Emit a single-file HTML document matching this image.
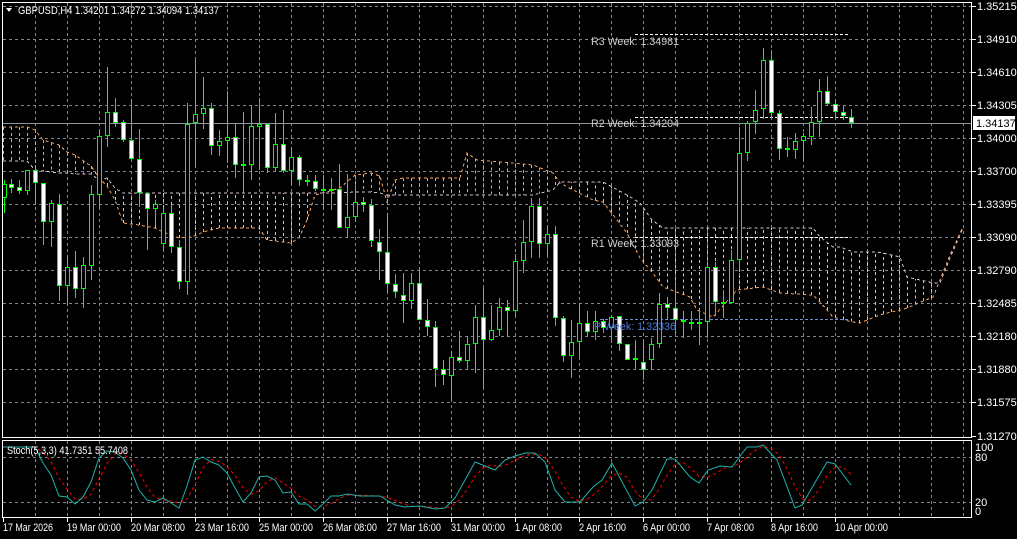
<!DOCTYPE html>
<html><head><meta charset="utf-8"><style>
html,body{margin:0;padding:0;background:#000;width:1017px;height:539px;overflow:hidden}
svg{display:block}
text{font-family:"Liberation Sans",sans-serif;font-size:11px}
</style></head><body>
<svg id="s" width="1017" height="539" xmlns="http://www.w3.org/2000/svg" shape-rendering="crispEdges">
<rect width="1017" height="539" fill="#000"/>
<g id="grid"></g>
<g id="cloud"></g>
<g id="piv">
<line x1="635" y1="34.5" x2="848" y2="34.5" stroke="#fff" stroke-dasharray="3,2"/>
<line x1="635" y1="117.5" x2="848" y2="117.5" stroke="#fff" stroke-dasharray="3,2"/>
<line x1="635" y1="237.5" x2="848" y2="237.5" stroke="#fff" stroke-dasharray="3,2"/>
<line x1="600" y1="319.5" x2="848" y2="319.5" stroke="#6f8fd0" stroke-dasharray="3,2"/>
</g>
<line x1="3" y1="123.5" x2="971" y2="123.5" stroke="#8c96a0"/>
<g id="candles"></g>
<g fill="#d0d0d0">
<text x="591" y="45" textLength="88" lengthAdjust="spacingAndGlyphs">R3 Week: 1.34981</text>
<text x="591" y="127" textLength="88" lengthAdjust="spacingAndGlyphs">R2 Week: 1.34204</text>
<text x="591" y="247" textLength="88" lengthAdjust="spacingAndGlyphs">R1 Week: 1.33093</text>
</g>
<text x="594" y="330" fill="#4a78d8" textLength="82" lengthAdjust="spacingAndGlyphs">P Week: 1.32336</text>
<g id="stoch"></g>
<rect x="2.5" y="2.5" width="969" height="435" fill="none" stroke="#fff"/>
<rect x="2.5" y="440.5" width="969" height="77" fill="none" stroke="#fff"/>
<polygon points="6,8 12,8 9,12" fill="#fff"/>
<text x="18" y="14" fill="#fff" textLength="201" lengthAdjust="spacingAndGlyphs">GBPUSD,H4  1.34201 1.34272 1.34094 1.34137</text>
<text x="7" y="454" fill="#fff" textLength="121" lengthAdjust="spacingAndGlyphs">Stoch(5,3,3) 41.7351 55.7408</text>
<g id="axis" fill="#fff"></g>
<rect x="973" y="116" width="42" height="14" fill="#fff"/>
<text x="976" y="127" fill="#000">1.34137</text>
</svg>
<script>
var NS="http://www.w3.org/2000/svg";
function el(p,t,a,txt){var e=document.createElementNS(NS,t);for(var k in a)e.setAttribute(k,a[k]);if(txt!=null)e.textContent=txt;document.getElementById(p).appendChild(e);return e;}
for(var x=35;x<972;x+=32){el('grid','line',{x1:x+.5,y1:3,x2:x+.5,y2:437,stroke:'#7c8694','stroke-dasharray':'3,3'});el('grid','line',{x1:x+.5,y1:441,x2:x+.5,y2:517,stroke:'#7c8694','stroke-dasharray':'3,3'});}
var prices=["1.35215","1.34910","1.34610","1.34305","1.34000","1.33700","1.33395","1.33090","1.32790","1.32485","1.32180","1.31880","1.31575","1.31270"];
for(var i=0;i<14;i++){var y=6+i*33-(i==13?-1:0);if(i<13)el('grid','line',{x1:3,y1:y+.5,x2:971,y2:y+.5,stroke:'#7c8694','stroke-dasharray':'3,3'});
el('axis','line',{x1:972,y1:y+.5,x2:976,y2:y+.5,stroke:'#fff'});el('axis','text',{x:977,y:y+4},prices[i]);}
el('grid','line',{x1:3,y1:457.5,x2:971,y2:457.5,stroke:'#7c8694','stroke-dasharray':'3,3'});
el('grid','line',{x1:3,y1:502.5,x2:971,y2:502.5,stroke:'#7c8694','stroke-dasharray':'3,3'});
[["100",451],["80",461],["20",506],["0",515]].forEach(function(a){el('axis','text',{x:975,y:a[1]},a[0]);});
var tl=[["17 Mar 2026",3,50],["19 Mar 00:00",67,54],["20 Mar 08:00",131,54],["23 Mar 16:00",195,54],["25 Mar 00:00",259,54],["26 Mar 08:00",323,54],["27 Mar 16:00",387,54],["31 Mar 00:00",451,54],["1 Apr 08:00",515,47],["2 Apr 16:00",579,47],["6 Apr 00:00",643,47],["7 Apr 08:00",707,47],["8 Apr 16:00",771,47],["10 Apr 00:00",835,53]];
tl.forEach(function(a){el('axis','line',{x1:a[1]+.5,y1:518,x2:a[1]+.5,y2:522,stroke:'#fff'});el('axis','text',{x:a[1],y:531,textLength:a[2],lengthAdjust:'spacingAndGlyphs'},a[0]);});
var C=[[3,127,161],[27,127,161],[35,130,170],[43,140,171],[59,145,173],[67,152,173],[75,155,174],[91,166,174],[99,178,180],[107,186,178],[115,200,188],[123,223,193],[139,225,193],[155,228,193],[163,232,193],[179,238,193],[195,236,193],[203,232,193],[219,228,193],[259,228,193],[267,240,193],[291,243,193],[299,238,193],[307,220,193],[315,195,193],[323,193,193],[340,188,193],[355,175,192],[371,173,192],[380,176,193],[387,202,195],[395,180,195],[403,178,195],[460,178,195],[467,153,195],[477,160,195],[533,165,195],[553,173,190],[560,183,182],[573,190,182],[593,200,182],[603,202,182],[627,233,195],[640,258,203],[652,272,220],[663,287,228],[690,297,228],[697,310,228],[713,317,228],[737,290,228],[763,287,228],[780,293,228],[813,295,228],[820,302,237],[833,317,247],[840,319,247],[853,322,252],[860,323,252],[877,316,252],[887,313,254],[900,310,257],[907,308,277],[933,297,283],[940,280,283],[950,255,258],[963,227,228]];
function interp(x,k){for(var i=0;i<C.length-1;i++){if(x>=C[i][0]&&x<=C[i+1][0]){var t=(x-C[i][0])/(C[i+1][0]-C[i][0]||1);return C[i][k]+t*(C[i+1][k]-C[i][k]);}}return C[C.length-1][k];}
var po="",pl="";C.forEach(function(c){po+=c[0]+","+c[1]+" ";pl+=c[0]+","+c[2]+" ";});
for(var x=3;x<=963;x+=8){var a=interp(x,1),b=interp(x,2);if(Math.abs(a-b)>3){var col=a<b?'#f4a460':'#d8bfd8';el('cloud','line',{x1:x+.5,y1:a,x2:x+.5,y2:b,stroke:col,'stroke-dasharray':'3,3'});}}
el('cloud','polyline',{points:po,fill:'none',stroke:'#f4a460','stroke-dasharray':'3,3'});
el('cloud','polyline',{points:pl,fill:'none',stroke:'#d8bfd8','stroke-dasharray':'3,3'});
var K=[[4,180,184,198,213,1],[11,179,184,188,193,0],[19,180,187,191,194,0],[27,170,170,191,195,1],[35,170,170,183,205,0],[43,183,183,222,245,0],[51,200,203,222,247,1],[59,194,204,286,301,0],[67,256,267,286,306,1],[75,251,267,289,298,0],[83,257,265,289,308,1],[91,185,194,266,280,1],[99,129,136,195,208,1],[107,67,112,136,147,1],[115,98,112,123,127,0],[123,120,122,140,142,0],[131,99,140,159,160,0],[139,129,159,193,207,0],[147,193,193,209,250,0],[155,200,204,209,225,1],[163,207,213,244,250,1],[171,205,213,247,253,0],[179,240,247,282,289,0],[187,103,124,282,295,1],[195,60,114,123,167,1],[203,77,108,114,129,1],[211,103,108,146,155,0],[219,130,141,146,156,1],[227,91,137,141,163,1],[235,124,137,165,178,0],[243,112,164,165,193,1],[251,105,126,165,180,1],[259,98,124,127,170,1],[267,123,124,168,173,0],[275,113,144,168,172,1],[283,110,144,171,173,0],[291,147,157,171,185,1],[299,155,157,180,186,0],[307,175,180,181,186,1],[315,175,181,189,191,0],[323,175,189,190,210,1],[331,178,189,190,210,0],[339,164,189,228,228,0],[347,174,217,228,238,1],[355,186,202,217,222,1],[363,197,202,205,212,0],[371,199,205,241,247,0],[379,229,242,252,280,0],[387,213,252,284,293,0],[395,274,284,292,298,0],[403,273,295,301,323,0],[411,273,283,301,309,1],[419,267,283,320,320,0],[427,299,320,327,336,0],[435,321,327,369,387,0],[443,360,369,375,385,0],[451,351,357,376,400,1],[459,331,357,361,363,0],[467,336,344,361,370,1],[475,305,317,344,373,1],[483,288,317,340,388,0],[491,305,330,340,341,1],[499,298,307,330,336,1],[507,300,307,311,336,0],[515,254,261,311,318,1],[523,220,242,261,273,1],[531,198,206,242,258,1],[539,198,206,244,258,0],[547,226,234,244,256,1],[555,226,234,318,326,0],[563,316,318,356,362,0],[571,320,342,356,378,1],[579,303,323,342,357,1],[587,311,323,332,336,0],[595,311,321,332,340,1],[603,319,321,328,333,0],[611,316,317,328,343,1],[619,316,316,344,351,0],[627,344,344,360,360,0],[635,340,358,360,369,0],[643,340,362,370,380,0],[651,338,344,360,370,1],[659,293,304,344,348,1],[667,297,304,308,320,0],[675,284,308,320,334,0],[683,311,320,322,338,0],[691,311,322,324,330,0],[699,309,322,324,345,0],[707,262,267,322,338,1],[715,262,267,302,316,0],[723,290,302,303,318,1],[731,250,260,303,303,1],[739,127,153,260,268,1],[747,121,123,153,161,1],[755,90,110,122,134,1],[763,48,60,109,119,1],[771,50,60,113,118,0],[779,110,113,149,160,0],[787,137,148,150,157,0],[795,133,141,150,159,1],[803,133,136,141,161,1],[811,107,122,137,145,1],[819,79,91,122,137,1],[827,76,91,104,106,0],[835,100,104,112,118,0],[843,105,112,116,120,0],[851,109,117,123,128,0]];
K.forEach(function(c){var x=c[0];el('candles','line',{x1:x+.5,y1:c[1],x2:x+.5,y2:c[4],stroke:'#00ff00'});
var h=Math.max(c[3]-c[2],1);
if(h<=2){el('candles','rect',{x:x-2,y:c[2],width:5,height:2,fill:'#00ff00'});}
else el('candles','rect',{x:x-2+.5,y:c[2]+.5,width:4,height:h-1,fill:c[5]?'#000':'#fff',stroke:'#00ff00'});});
var M=[[3,447],[35,447],[43,463],[51,475],[59,496],[67,497],[75,504],[83,497],[91,482],[99,458],[107,451],[115,452],[123,458],[131,470],[139,490],[147,500],[155,502],[163,498],[171,503],[179,508],[187,486],[195,460],[203,457],[211,462],[219,465],[227,473],[235,488],[243,502],[251,493],[259,477],[267,476],[275,480],[283,493],[291,492],[299,504],[307,504],[315,511],[323,504],[331,496],[339,496],[347,494],[360,496],[380,496],[395,505],[405,507],[420,506],[435,509],[445,508],[455,498],[465,480],[475,462],[485,466],[495,470],[505,460],[515,456],[525,453],[535,453],[545,462],[555,490],[565,502],[580,502],[593,487],[602,480],[612,463],[635,506],[643,502],[652,490],[667,459],[675,459],[690,477],[699,483],[708,470],[720,466],[732,467],[747,447],[757,447],[763,445],[777,460],[795,508],[802,505],[827,462],[835,464],[851,485]];
function mi(x){for(var i=0;i<M.length-1;i++){if(x>=M[i][0]&&x<=M[i+1][0]){var t=(x-M[i][0])/(M[i+1][0]-M[i][0]);return M[i][1]+t*(M[i+1][1]-M[i][1]);}}return M[M.length-1][1];}
var pm="",ps="";M.forEach(function(p){pm+=p[0]+","+p[1]+" ";});
for(var x=3;x<=851;x+=8){var v=(mi(x)+mi(Math.max(3,x-8))+mi(Math.max(3,x-16)))/3;ps+=x+","+v.toFixed(1)+" ";}
el('stoch','polyline',{points:ps,fill:'none',stroke:'#ff0000','stroke-dasharray':'3,3','shape-rendering':'auto'});
el('stoch','polyline',{points:pm,fill:'none',stroke:'#20b2aa','shape-rendering':'auto'});
</script>
</body></html>
